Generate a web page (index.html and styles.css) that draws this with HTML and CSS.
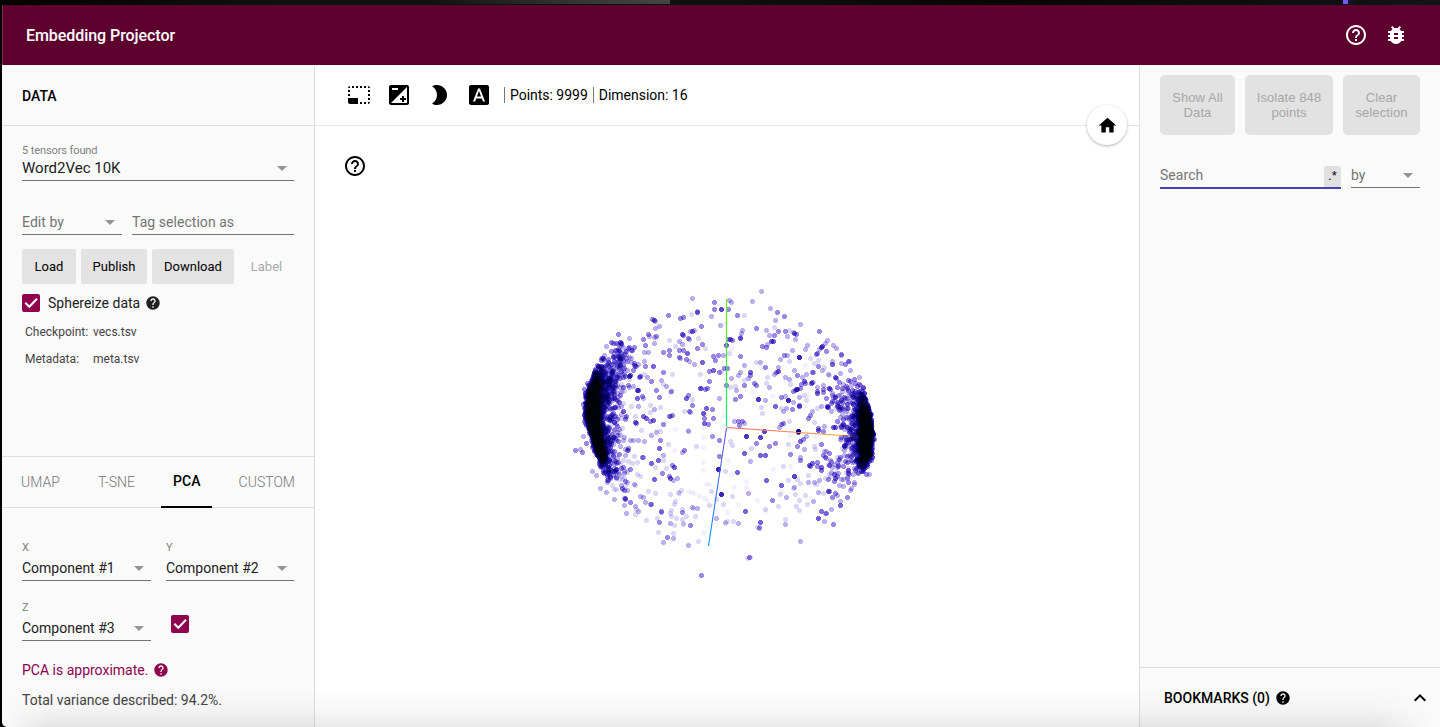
FILE: index.html
```html
<!DOCTYPE html>
<html lang="en">
<head>
<meta charset="utf-8">
<title>Embedding Projector</title>
<link rel="stylesheet" href="styles.css">
</head>
<body>
<svg class="defs" width="0" height="0">
  <symbol id="help-outline" viewBox="0 0 24 24"><path d="M11 18h2v-2h-2v2zm1-16C6.48 2 2 6.48 2 12s4.48 10 10 10 10-4.48 10-10S17.52 2 12 2zm0 18c-4.41 0-8-3.59-8-8s3.59-8 8-8 8 3.59 8 8-3.59 8-8 8zm0-14c-2.21 0-4 1.79-4 4h2c0-1.1.9-2 2-2s2 .9 2 2c0 2-3 1.75-3 5h2c0-2.25 3-2.5 3-5 0-2.21-1.79-4-4-4z"/></symbol>
  <symbol id="help" viewBox="0 0 24 24"><path d="M12 2C6.48 2 2 6.48 2 12s4.48 10 10 10 10-4.48 10-10S17.52 2 12 2zm1 17h-2v-2h2v2zm2.07-7.75l-.9.92C13.45 12.9 13 13.5 13 15h-2v-.5c0-1.1.45-2.1 1.17-2.83l1.24-1.26c.37-.36.59-.86.59-1.41 0-1.1-.9-2-2-2s-2 .9-2 2H8c0-2.21 1.79-4 4-4s4 1.79 4 4c0 .88-.36 1.68-.93 2.25z"/></symbol>
  <symbol id="arrow" viewBox="0 0 24 24"><path d="M7 10l5 5 5-5z"/></symbol>
  <symbol id="check" viewBox="0 0 18 18"><path d="M3.3 8.8l4 4L15 4.8" fill="none" stroke="#fff" stroke-width="2"/></symbol>
</svg>
<div class="strip"><i class="tab"></i><i class="spark"></i></div>
<header class="header">
  <h1>Embedding Projector</h1>
  <svg class="icon"><use href="#help-outline"/></svg>
  <svg class="icon" viewBox="0 0 24 24"><path d="M20 8h-2.81c-.45-.78-1.07-1.45-1.82-1.96L17 4.41 15.59 3l-2.17 2.17C12.96 5.06 12.49 5 12 5c-.49 0-.96.06-1.41.17L8.41 3 7 4.41l1.62 1.63C7.88 6.55 7.26 7.22 6.81 8H4v2h2.09c-.05.33-.09.66-.09 1v1H4v2h2v1c0 .34.04.67.09 1H4v2h2.81c1.04 1.79 2.97 3 5.19 3s4.15-1.21 5.19-3H20v-2h-2.09c.05-.33.09-.66.09-1v-1h2v-2h-2v-1c0-.34-.04-.67-.09-1H20V8zm-6 8h-4v-2h4v2zm0-4h-4v-2h4v2z"/></svg>
</header>
<div class="body">
  <aside class="left">
    <div class="title">DATA</div>
    <section class="data">
      <div class="field dataset"><small>5 tensors found</small><div class="line big"><span>Word2Vec 10K</span><svg><use href="#arrow"/></svg></div></div>
      <div class="edit">
        <div class="line hint"><span>Edit by</span><svg><use href="#arrow"/></svg></div>
        <div class="line hint"><span>Tag selection as</span></div>
      </div>
      <div class="buttons"><button>Load</button><button>Publish</button><button>Download</button><button class="off">Label</button></div>
      <div class="sphere"><svg class="box"><use href="#check"/></svg><span>Sphereize data</span><svg class="mini"><use href="#help"/></svg></div>
      <div class="files"><span>Checkpoint:</span><span>vecs.tsv</span><span>Metadata:</span><span>meta.tsv</span></div>
    </section>
    <nav class="tabs"><span>UMAP</span><span>T-SNE</span><span class="active">PCA</span><span>CUSTOM</span></nav>
    <section class="pca">
      <div class="axes">
        <div class="field"><small>X</small><div class="line"><span>Component #1</span><svg><use href="#arrow"/></svg></div></div>
        <div class="field"><small>Y</small><div class="line"><span>Component #2</span><svg><use href="#arrow"/></svg></div></div>
        <div class="field"><small>Z</small><div class="line"><span>Component #3</span><svg><use href="#arrow"/></svg></div></div>
        <svg class="box"><use href="#check"/></svg>
      </div>
      <p class="approx"><span>PCA is approximate.</span><svg class="mini"><use href="#help"/></svg></p>
      <p class="variance">Total variance described: 94.2%.</p>
    </section>
  </aside>
  <main class="main">
    <div class="toolbar">
      <svg class="icon" viewBox="0 0 24 24"><path d="M23 15h-2v2h2v-2zm0-4h-2v2h2v-2zm0 8h-2v2c1 0 2-1 2-2zM15 3h-2v2h2V3zm8 4h-2v2h2V7zm-2-4v2h2c0-1-1-2-2-2zM3 21h8v-6H1v4c0 1.100.9 2 2 2zM3 7H1v2h2V7zm12 12h-2v2h2v-2zm4-16h-2v2h2V3zm0 16h-2v2h2v-2zM3 3C2 3 1 4 1 5h2V3zm0 8H1v2h2v-2zm8-8H9v2h2V3zM7 3H5v2h2V3z"/></svg>
      <svg class="icon" viewBox="0 0 24 24"><path d="M15 17v2h2v-2h2v-2h-2v-2h-2v2h-2v2h2zm5-15H4c-1.100 0-2 .9-2 2v16c0 1.100.9 2 2 2h16c1.100 0 2-.9 2-2V4c0-1.100-.9-2-2-2zM5 5h6v2H5V5zm15 15H4L20 4v16z"/></svg>
      <svg class="icon" viewBox="0 0 24 24"><path d="M10 2c-1.820 0-3.530.5-5 1.350C7.990 5.080 10 8.300 10 12s-2.010 6.920-5 8.650C6.470 21.500 8.180 22 10 22c5.520 0 10-4.480 10-10S15.520 2 10 2z"/></svg>
      <svg class="icon" viewBox="0 0 24 24"><path d="M9.930 13.500h4.140L12 7.980zM20 2H4c-1.100 0-2 .9-2 2v16c0 1.100.9 2 2 2h16c1.100 0 2-.9 2-2V4c0-1.100-.9-2-2-2zm-4.050 16.500l-1.140-3H9.170l-1.120 3H5.960l5.110-13h1.860l5.110 13h-2.090z"/></svg>
      <span class="stat">Points: 9999</span><span class="stat">Dimension: 16</span>
    </div>
    <div class="view">
      <canvas id="plot" width="824" height="601"></canvas>
      <svg class="icon viewhelp"><use href="#help-outline"/></svg>
      <div class="home"><svg viewBox="0 0 24 24"><path d="M10 20v-6h4v6h5v-8h3L12 3 2 12h3v8z"/></svg></div>
    </div>
  </main>
  <aside class="right">
    <div class="actions"><button>Show All Data</button><button>Isolate 848 points</button><button>Clear selection</button></div>
    <div class="search">
      <div class="query"><span>Search</span><b>.*</b></div>
      <div class="line hint"><span>by</span><svg><use href="#arrow"/></svg></div>
    </div>
    <div class="bookmarks"><span>BOOKMARKS (0)</span><svg class="mini"><use href="#help"/></svg><svg class="icon up" viewBox="0 0 24 24"><path d="M12 8l-6 6 1.410 1.410L12 10.830l4.590 4.580L18 14z"/></svg></div>
  </aside>
</div>
<div class="shade"></div>
<script src="plot.js"></script>
</body>
</html>
```
FILE: styles.css
```css
* { box-sizing: border-box; }
body { margin: 0; width: 1440px; height: 727px; overflow: hidden; background: #000; font-family: Roboto, "Liberation Sans", sans-serif; color: #212121; display: flex; flex-direction: column; position: relative; }
.defs { position: absolute; }
.strip { height: 5px; flex: none; display: flex; background: linear-gradient(90deg, #000, #111 20%, #111 45%, #050505 70%, #141416); }
.tab { width: 240px; height: 4px; margin-left: 430px; background: linear-gradient(90deg, #111, #343434 60%, #444); }
.spark { width: 5px; height: 4px; margin-left: 673px; background: #6d5cf0; box-shadow: 3px 0 6px #2a1a90; }
.header { height: 60px; flex: none; margin-left: 2px; padding: 0 32px 0 23px; background: #5d002e; color: #fff; display: flex; align-items: center; border-left: 1px solid #7d3057; }
.header h1 { flex: 1; margin: 0; font-size: 16px; font-weight: 500; letter-spacing: -.06px; }
.icon { width: 24px; height: 24px; fill: currentColor; flex: none; display: block; }
.header .icon + .icon { margin-left: 16px; }
.body { flex: 1; min-height: 0; margin-left: 2px; display: flex; border-bottom-left-radius: 5px; overflow: hidden; }
.left { width: 313px; flex: none; background: #fafafa; border-right: 1px solid #ddd; display: flex; flex-direction: column; }
.title { height: 61px; padding: 2px 20px 0; border-bottom: 1px solid #ddd; color: #000; font-size: 14px; font-weight: 500; display: flex; align-items: center; }
.data { height: 331px; padding: 18px 20px 0; border-bottom: 1px solid #ddd; }
.field small { display: block; font-size: 11px; line-height: 14px; color: #808080; letter-spacing: -.1px; }
.line { height: 24px; padding-bottom: 1px; display: flex; justify-content: space-between; align-items: center; border-bottom: 1px solid #737373; font-size: 14px; letter-spacing: 0; white-space: nowrap; }
.line svg { width: 24px; height: 24px; fill: #949494; flex: none; }
.line.hint { color: #757575; letter-spacing: .05px; }
.field .big { font-size: 15px; height: 25px; margin-top: -2px; padding-bottom: 0; }
.dataset { margin-bottom: 30px; }
.edit { display: grid; grid-template-columns: 100px 162px; gap: 10px; }
.buttons { margin-top: 14px; display: flex; gap: 5px; }
.buttons button { height: 35px; width: 54px; padding: 0; border: 0; border-radius: 2px; background: #e3e3e3; color: #000; font: 13px Roboto, sans-serif; }
.buttons button:nth-child(2) { width: 66px; }
.buttons button:nth-child(3) { width: 82px; }
.buttons .off { width: 55px; background: none; color: #aaa; }
.sphere { height: 18px; margin-top: 10px; display: flex; align-items: center; font-size: 14px; }
.sphere span { margin: 0 5px 0 8px; }
.box { width: 18px; height: 18px; background: #8f004f; border-radius: 2px; }
.mini { width: 16px; height: 16px; fill: currentColor; }
.files { margin: 12px 0 0 3px; display: grid; grid-template-columns: 68px auto; grid-auto-rows: 27px; font-size: 12px; line-height: 16px; color: #444; }
.tabs { height: 51px; padding: 0 7px; border-bottom: 1px solid #ddd; display: flex; justify-content: space-between; font-size: 14px; font-weight: 300; color: #777; line-height: 50px; }
.tabs span { padding: 0 12px; height: 51px; }
.tabs .active { font-weight: 500; color: #000; border-bottom: 2px solid #000; line-height: 48px; }
.pca { padding: 33px 20px 0; }
.axes { display: grid; grid-template-columns: 129px 128px; column-gap: 15px; row-gap: 20px; align-items: start; }
.axes .line { margin-top: 2px; }
.axes .box { margin: 14px 0 0 5px; }
.approx, .variance { margin: 0; font-size: 14px; line-height: 20px; }
.approx { color: #8f004f; margin-top: 19px; display: flex; align-items: center; gap: 5px; }
.variance { color: #444; margin-top: 10px; }
.main { flex: 1; min-width: 0; background: #fff; display: flex; flex-direction: column; }
.toolbar { height: 61px; flex: none; padding: 0 32px; border-bottom: 1px solid #e8e8e8; display: flex; align-items: center; gap: 16px; color: #000; }
.stat { font-size: 14px; line-height: 16px; border-left: 1px solid #777; padding-left: 5px; margin-left: -3px; letter-spacing: -.02px; }
.stat + .stat { margin-left: -11px; }
.view { flex: 1; min-height: 0; position: relative; }
.view canvas { display: block; }
.viewhelp { position: absolute; left: 28px; top: 28px; color: #000; }
.home { position: absolute; left: 772px; top: -21px; width: 40px; height: 40px; border-radius: 50%; background: #fff; box-shadow: 0 1px 3px rgba(0,0,0,.3); display: flex; align-items: center; justify-content: center; }
.home svg { width: 21px; height: 21px; }
.right { width: 301px; flex: none; background: #fafafa; border-left: 1px solid #ddd; display: flex; flex-direction: column; }
.actions { padding: 10px 20px 0; display: grid; grid-template-columns: 75px 88px 77px; gap: 10px; }
.actions button { height: 60px; border: 0; border-radius: 5px; padding: 0 8px; background: #e2e2e2; color: #a6a6a6; font: 13px/15px "Liberation Sans", Arial, sans-serif; letter-spacing: .08px; }
.search { margin: 28px 20px 0; display: grid; grid-template-columns: 181px 69px; gap: 10px; }
.query { height: 26px; border-bottom: 2px solid #4540bd; color: #757575; font-size: 14px; letter-spacing: .05px; display: flex; justify-content: space-between; align-items: center; }
.query b { width: 17px; height: 21px; margin-top: 3px; background: #e0e0e0; border-radius: 2px; color: #000; font: 13px/20px "Liberation Sans", sans-serif; text-align: center; }
.search .line { height: 25px; padding-bottom: 0; }
.bookmarks { margin-top: auto; height: 60px; border-top: 1px solid #ddd; padding: 1px 8px 0 24px; display: flex; align-items: center; font-size: 14px; font-weight: 500; color: #000; }
.bookmarks .mini { margin-left: 5px; }
.bookmarks .up { margin-left: auto; }
.shade { position: absolute; left: 2px; bottom: 0; width: 1430px; height: 42px; background: linear-gradient(rgba(0,0,0,0), rgba(0,0,0,.025) 55%, rgba(0,0,0,.085)); -webkit-mask-image: linear-gradient(90deg, transparent, #000 50px, #000 1370px, transparent); border-bottom-left-radius: 5px; pointer-events: none; }
```
FILE: plot.js
```js
const ctx = document.getElementById('plot').getContext('2d');
const OX = 315, OY = 126;
const SHADES = ['#f3f1fd', '#dcd7f6', '#bcb0ee', '#9a87e6', '#7a62da'];
let seed = 20177;
function rnd() {
  seed = (seed * 1664525 + 1013904223) >>> 0;
  return seed / 4294967296;
}
function gauss() {
  return rnd() + rnd() + rnd() + rnd() - 2;
}
ctx.globalCompositeOperation = 'multiply';
// A point is a 4px square with a 1px bump on the edges it rounds.
function point(x, y, shade) {
  x = Math.round(x - OX) - 2;
  y = Math.round(y - OY) - 2;
  ctx.fillStyle = SHADES[shade];
  ctx.fillRect(x + 1, y, 3, 1);
  ctx.fillRect(x, y + 1, 5, 3);
  ctx.fillRect(x + 1, y + 4, 3, 1);
}
// Sampled points, per tile: x, y in thirds of a pixel, then shade.
const TILES = [
  [560, 280, `397 55 2,461 65 3,463 86 3,483 87 3,412 95 4,412 93 2,392 102 1,323 105 3,453 107 2,281 119 4,277 117 3,285 123 2,297 138 2,285 145 2,359 115 3,370 112 3,423 138 3,480 135 2,397 152 4,401 149 2,391 154 2,366 163 4,368 165 3,174 162 3,152 187 3,158 188 3,181 187 4,183 188 4,208 174 2,204 203 3,206 201 3,265 163 3,267 168 2,281 170 2,289 169 3,248 177 3,281 190 2,254 194 3,252 216 2,265 217 2,328 181 1,328 211 3,310 216 3,327 225 3,345 197 1,357 184 2,367 193 2,384 175 3,387 178 2,411 203 3,426 191 3,415 173 1,435 203 1,357 210 3,370 211 3,382 219 4,357 232 3,359 233 2,379 236 3,388 242 2,403 251 2,425 246 4,459 228 3,474 226 3,490 226 2,466 239 3,446 274 3,460 271 4,478 277 3,482 272 1,492 264 3,446 304 3,421 282 1,337 283 1,310 277 3,279 257 4,233 253 2,253 242 2,256 258 3,208 287 4,240 289 4,238 291 3,251 282 1,262 292 2,273 304 3,302 299 2,308 313 1,319 317 2,333 332 3,330 336 1,232 330 4,234 330 4,247 349 3,249 354 2,231 354 4,289 331 3,298 350 3,384 345 3,377 354 4,397 358 1,395 376 3,388 393 3,391 397 2,373 393 1,436 326 3,421 325 4,422 325 2,442 325 3,476 355 2,437 383 4,457 387 3,429 398 4,431 401 1,431 414 3,460 414 3,433 428 4,445 433 3,327 407 3,337 406 3,331 408 2,309 431 3,299 380 1,269 374 1,281 386 2,271 397 1,248 408 4,257 415 4,269 422 3,280 420 4,226 427 4,228 429 3,233 379 2,213 379 1,226 407 1,344 447 0,383 450 1,430 440 0,430 470 0,455 467 1,242 450 1,272 466 2,291 448 0,301 452 1,505 87 3,504 176 3,499 195 4`],
  [720, 280, `123 33 2,27 60 2,33 65 2,97 62 2,4 88 3,50 106 3,73 106 1,149 84 2,172 97 3,193 108 3,166 121 2,239 132 2,109 145 3,66 149 2,15 130 0,30 177 4,36 180 3,60 174 4,59 172 2,62 160 2,139 151 2,162 140 1,175 154 3,162 164 3,147 166 2,195 153 3,200 168 2,206 149 1,218 157 2,222 159 4,228 163 3,224 178 2,153 184 4,158 184 4,127 199 3,138 202 3,140 192 2,296 154 3,321 180 2,315 188 2,340 196 2,306 199 4,303 201 4,262 195 2,255 206 2,317 214 3,290 219 3,289 223 3,296 208 2,362 221 3,363 226 2,349 204 2,61 229 3,33 205 0,27 220 1,181 236 2,193 225 3,202 224 2,216 210 2,208 242 1,237 231 4,236 230 4,71 255 2,109 247 1,119 246 2,125 263 0,136 260 3,384 242 3,386 243 2,374 251 3,363 250 2,337 253 4,335 243 2,391 271 2,294 241 1,283 250 1,254 255 0,270 234 1,257 283 2,275 277 3,280 277 2,295 258 3,306 269 2,311 262 1,323 281 2,328 284 1,61 275 2,91 277 4,90 284 3,53 286 2,84 294 2,73 300 1,71 314 3,34 295 2,103 310 3,109 316 3,141 291 1,139 309 1,148 322 2,174 273 4,169 276 3,173 260 2,163 281 2,20 264 3,19 314 3,30 322 1,45 317 1,47 331 2,61 347 3,46 357 3,95 333 0,114 357 4,115 357 3,136 360 2,156 347 0,164 379 4,183 352 3,196 349 2,203 361 4,205 361 4,222 271 2,231 286 3,245 290 2,208 296 2,209 312 1,196 292 2,243 313 3,252 303 4,254 310 3,273 309 4,276 306 3,232 327 4,229 328 4,241 324 3,220 334 3,226 331 2,238 352 2,253 344 1,257 361 1,264 346 0,290 339 4,291 333 3,290 322 2,308 336 3,327 324 4,331 328 3,335 338 2,346 292 4,348 294 3,356 307 3,369 312 2,237 376 3,236 379 4,219 366 2,216 386 3,197 383 2,190 394 2,184 384 1,123 381 1,125 399 1,253 377 0,276 393 2,269 406 3,263 415 3,281 425 1,321 377 4,323 382 3,337 362 3,333 393 2,302 379 2,292 383 1,13 407 0,54 422 3,66 424 3,41 424 2,71 428 2,57 435 3,190 428 3,184 433 3,178 442 2,207 423 1,234 452 4,234 452 4,133 454 3,119 470 3,79 468 3,207 464 0,259 467 1,295 449 4,294 444 3,309 452 3,286 467 0,340 440 4,345 442 4,364 440 3,350 423 3,385 300 3,402 298 3,418 292 2,405 310 3,412 318 3,430 320 3,432 338 4,378 318 3,380 324 3,366 332 2,395 330 3,418 334 3,400 350 4,372 350 3,362 360 3,352 378 3,366 386 3,380 372 3`],
  [560, 430, `300 29 3,324 43 1,296 55 4,310 75 2,295 89 4,308 91 1,246 82 3,249 80 2,272 100 4,285 112 1,371 59 3,367 65 2,409 48 1,343 60 0,383 3 2,287 5 2,335 106 3,343 111 4,331 143 4,328 139 3,338 149 2,351 143 2,307 130 3,319 114 1,281 148 4,203 55 3,205 61 2,223 78 1,205 93 1,217 100 1,231 96 1,209 29 2,220 30 2,233 30 2,252 33 2,181 47 2,176 73 3,180 101 1,232 132 1,240 137 1,45 59 3,60 58 2,66 65 3,70 18 2,79 40 3,97 124 2,107 136 2,121 175 2,138 185 2,161 206 2,194 205 3,194 207 3,192 224 2,197 250 2,211 217 3,225 229 2,235 244 2,224 251 1,228 238 1,240 197 2,248 200 2,255 216 2,273 222 3,270 222 2,265 182 1,284 190 1,259 271 1,302 244 3,303 245 2,290 265 1,298 277 3,294 306 1,309 335 2,322 322 3,338 323 2,339 310 1,331 250 1,332 257 1,330 280 2,342 285 1,348 264 1,334 239 1,346 214 1,341 223 1,330 191 1,355 185 1,364 181 1,358 189 1,383 184 0,392 187 0,401 189 0,366 246 3,365 236 1,377 258 1,367 268 1,370 281 1,368 279 1,391 285 3,397 232 2,400 233 1,410 234 2,404 257 1,383 346 2,413 332 1,428 307 0,423 435 3,455 17 2,476 31 3,476 78 3,474 116 4,474 117 4,482 191 4,453 184 1,439 162 0,448 163 0,429 96 0,428 120 0,428 50 0,417 199 0,431 205 0,442 210 0,448 225 1,468 207 1,469 265 2,494 278 1,501 272 1,475 172 0`],
  [720, 430, `78 17 4,120 20 3,133 4 3,30 32 1,35 46 1,92 55 1,147 47 3,164 40 3,109 40 3,73 70 4,121 76 4,136 76 4,90 94 2,25 91 0,16 122 1,52 127 4,32 132 0,139 151 4,160 118 0,184 166 4,77 154 0,77 172 0,84 189 2,43 172 0,37 199 1,110 211 0,156 209 3,199 201 2,181 192 1,184 182 0,4 191 4,10 223 1,55 223 0,74 243 4,22 246 0,134 238 1,139 244 0,175 227 1,38 273 1,53 280 2,15 277 1,121 277 4,118 290 2,118 295 2,110 290 1,196 268 1,196 282 2,240 332 2,86 382 3,82 383 1,90 382 1,209 72 3,203 41 1,232 48 3,253 56 2,239 32 4,248 27 3,259 19 1,234 5 4,234 4 4,302 43 3,281 48 1,284 56 1,240 82 2,240 91 3,190 109 1,211 109 0,223 138 4,223 138 2,223 172 2,218 174 1,204 151 1,231 146 1,240 158 1,265 136 1,264 157 2,281 155 2,288 162 1,277 98 4,267 106 4,270 108 3,291 109 3,291 96 3,310 75 3,326 70 3,317 85 2,304 112 4,304 121 3,304 121 1,328 104 4,330 91 2,298 149 2,316 144 1,225 193 1,255 196 1,237 211 1,229 228 1,236 240 1,260 221 1,278 214 2,295 187 2,309 188 1,325 183 4,327 183 3,335 201 3,345 190 3,351 195 2,382 202 3,361 226 4,360 214 2,391 180 2,393 174 2,402 162 2,402 156 2,438 132 3,446 132 2,334 238 2,303 243 3,304 243 1,319 249 3,316 250 2,294 265 3,294 265 2,313 274 2,340 281 3,343 133 4,344 145 4,343 152 3,358 165 2,368 168 2,364 146 2,383 130 4,383 120 4`]
];
for (const [tx, ty, list] of TILES) {
  for (const item of list.split(',')) {
    const [a, b, s] = item.split(' ').map(Number);
    point(tx + a / 3, ty + b / 3, s);
  }
}
// Horizontal centre of a cluster at a given height, from its knots.
function along(knots, y) {
  for (let i = 1; i < knots.length; i++) {
    if (y <= knots[i][0]) {
      const [y0, x0] = knots[i - 1], [y1, x1] = knots[i];
      return x0 + (x1 - x0) * (y - y0) / (y1 - y0);
    }
  }
  return knots[knots.length - 1][1];
}
const LEFT = [[340, 614], [362, 603], [377, 597], [393, 593], [413, 592], [430, 595], [450, 600], [465, 605], [480, 612], [495, 620]];
const RIGHT = [[375, 854], [395, 860], [410, 864], [430, 866], [455, 865], [470, 860], [480, 856]];
function core(knots, cy, spread, halfWidth, n) {
  for (let i = 0; i < n; i++) {
    const y = cy + gauss() * spread;
    point(along(knots, y) + gauss() * halfWidth, y, 3);
  }
}
core(LEFT, 407, 24, 6, 1300);
core(LEFT, 437, 22, 4.500, 900);
core(RIGHT, 434, 24, 5, 1700);
function halo(knots, cy, spread, side, reach, n) {
  for (let i = 0; i < n; i++) {
    const y = cy + gauss() * spread;
    const d = -Math.log(1 - rnd() * .94) * reach;
    point(along(knots, y) + side * (d - 5), y, d > reach * 1.400 ? 1 + Math.floor(rnd() * 3) : 2 + Math.floor(rnd() * 2));
  }
}
halo(LEFT, 392, 27, 1, 14, 620);
halo(LEFT, 440, 32, 1, 12, 400);
halo(RIGHT, 426, 32, -1, 11, 620);
halo(RIGHT, 446, 22, -1, 10, 120);
// Upper-left and lower-right fringes of the sphere.
for (let i = 0; i < 75; i++) point(620 + gauss() * 13, 362 + gauss() * 18, 2 + Math.floor(rnd() * 2));
for (let i = 0; i < 20; i++) point(617 + gauss() * 12, 483 + gauss() * 12, 1 + Math.floor(rnd() * 2));
for (let i = 0; i < 30; i++) point(835 + gauss() * 14, 400 + gauss() * 18, 1 + Math.floor(rnd() * 3));
for (let i = 0; i < 30; i++) point(836 + gauss() * 12, 467 + gauss() * 16, 1 + Math.floor(rnd() * 3));

ctx.globalCompositeOperation = 'source-over';
function axis(x0, y0, x1, y1, from, to, w) {
  const g = ctx.createLinearGradient(x0 - OX, y0 - OY, x1 - OX, y1 - OY);
  g.addColorStop(0, from);
  g.addColorStop(1, to);
  ctx.strokeStyle = g;
  ctx.lineWidth = w;
  ctx.beginPath();
  ctx.moveTo(x0 - OX, y0 - OY);
  ctx.lineTo(x1 - OX, y1 - OY);
  ctx.stroke();
}
axis(726.500, 427, 726.500, 299, '#00f070', '#70f000', 1.200);
axis(727, 427.500, 842, 435.500, '#ff6060', '#ffa030', 1.100);
axis(842, 435.500, 858, 436.500, '#a06030', '#301020', 1);
axis(726.500, 428, 708.500, 546, '#7050ff', '#0090ff', 1.100);
```
